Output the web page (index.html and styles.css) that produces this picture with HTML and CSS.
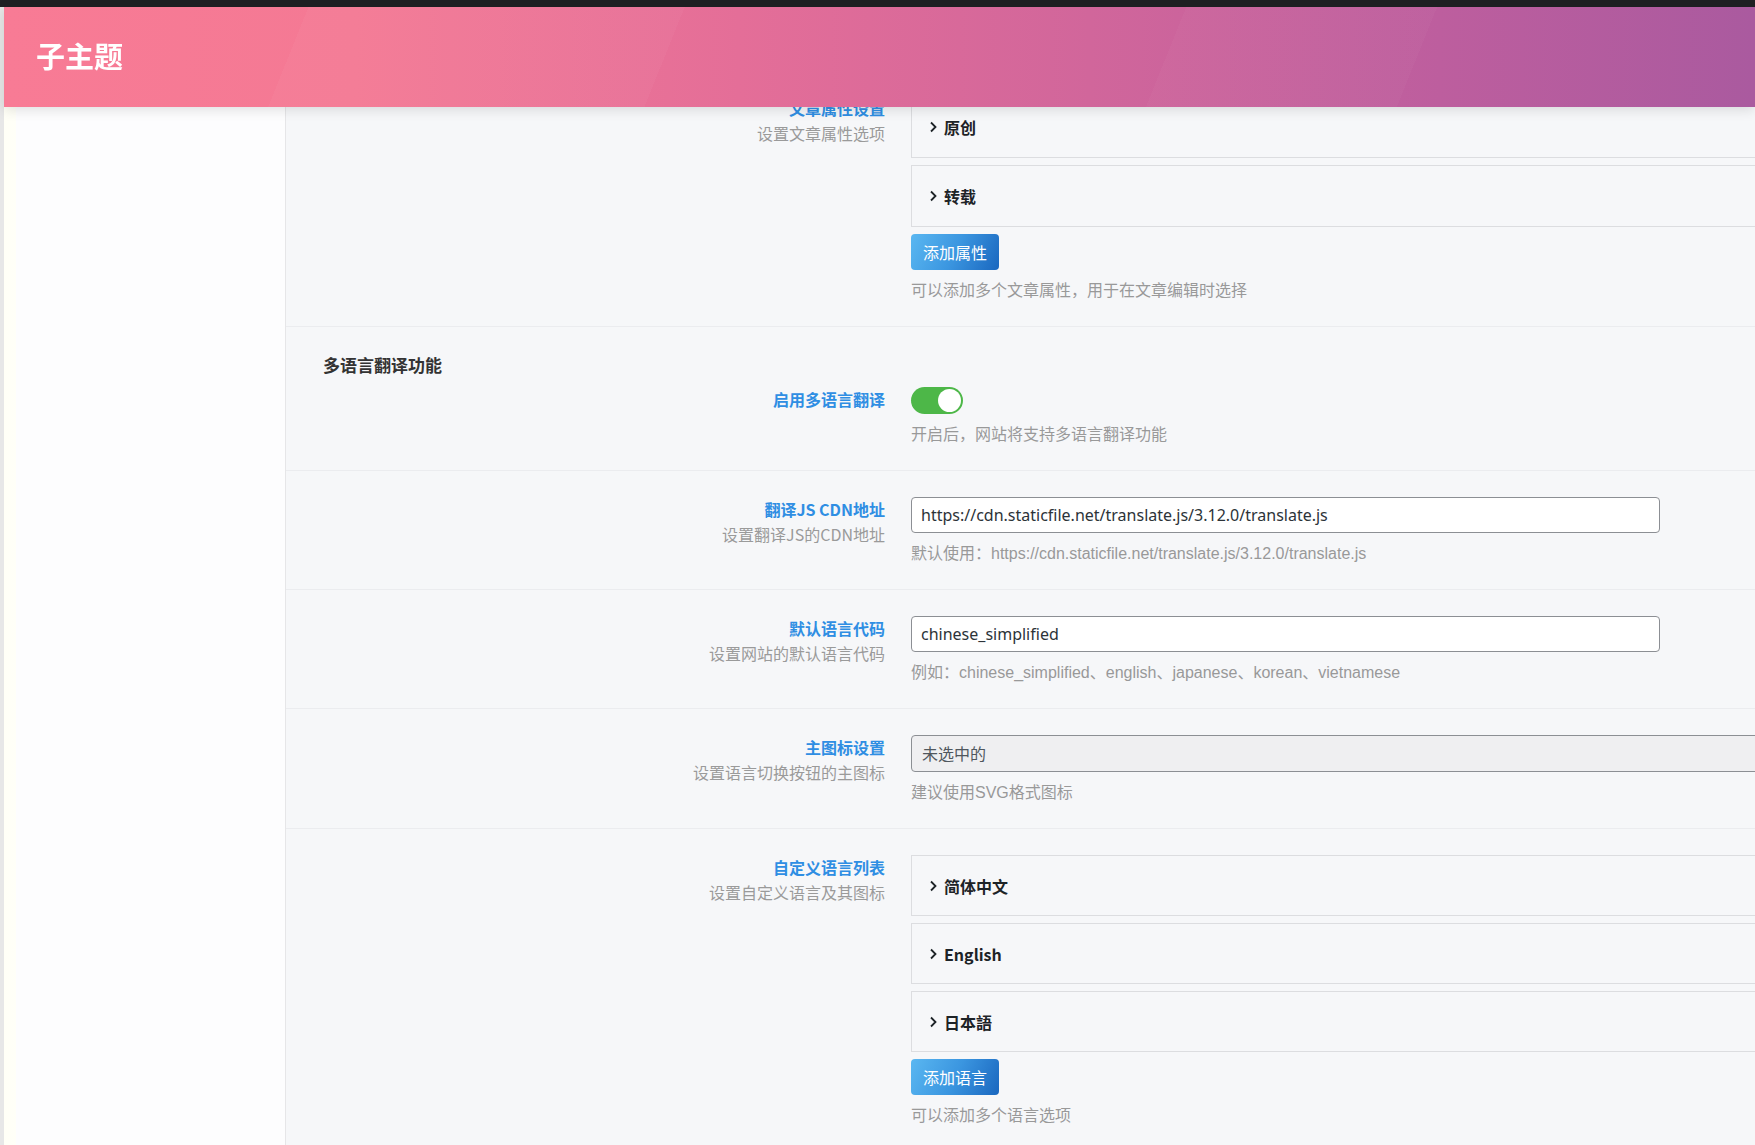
FILE: index.html
```html
<!DOCTYPE html>
<html lang="zh-CN">
  <head>
    <meta charset="UTF-8" />
    <meta name="viewport" content="width=device-width, initial-scale=1.0" />
    <title>子主题设置</title>
    <link rel="stylesheet" href="styles.css">
  </head>
  <body>
    <div class="topbar"></div>
    <header class="page-header">
      <h1>子主题</h1>
    </header>
    <div class="layout">
      <aside class="sidebar"></aside>
      <main class="options">
        <div class="opt-row">
          <div class="opt-label">
            <div class="opt-title">文章属性设置</div>
            <div class="opt-desc">设置文章属性选项</div>
          </div>
          <div class="opt-field">
            <div class="group-item">
              <svg class="chev" width="8" height="12" viewBox="0 0 8 12"><path d="M2 1.5l4.5 4.5-4.5 4.5" /></svg>
              <span>原创</span>
            </div>
            <div class="group-item">
              <svg class="chev" width="8" height="12" viewBox="0 0 8 12"><path d="M2 1.5l4.5 4.5-4.5 4.5" /></svg>
              <span>转载</span>
            </div>
            <button class="btn-add">添加属性</button>
            <p class="opt-help">可以添加多个文章属性，用于在文章编辑时选择</p>
          </div>
        </div>

        <div class="opt-section">
          <h3>多语言翻译功能</h3>
          <div class="opt-row">
            <div class="opt-label">
              <div class="opt-title">启用多语言翻译</div>
            </div>
            <div class="opt-field">
              <span class="switch on"><span class="knob"></span></span>
              <p class="opt-help">开启后，网站将支持多语言翻译功能</p>
            </div>
          </div>
        </div>

        <div class="opt-row">
          <div class="opt-label">
            <div class="opt-title">翻译JS CDN地址</div>
            <div class="opt-desc">设置翻译JS的CDN地址</div>
          </div>
          <div class="opt-field">
            <input class="text-input" type="text" value="https://cdn.staticfile.net/translate.js/3.12.0/translate.js" />
            <p class="opt-help">默认使用：https://cdn.staticfile.net/translate.js/3.12.0/translate.js</p>
          </div>
        </div>

        <div class="opt-row">
          <div class="opt-label">
            <div class="opt-title">默认语言代码</div>
            <div class="opt-desc">设置网站的默认语言代码</div>
          </div>
          <div class="opt-field">
            <input class="text-input" type="text" value="chinese_simplified" />
            <p class="opt-help">例如：chinese_simplified、english、japanese、korean、vietnamese</p>
          </div>
        </div>

        <div class="opt-row">
          <div class="opt-label">
            <div class="opt-title">主图标设置</div>
            <div class="opt-desc">设置语言切换按钮的主图标</div>
          </div>
          <div class="opt-field">
            <div class="upload-box">未选中的</div>
            <p class="opt-help">建议使用SVG格式图标</p>
          </div>
        </div>

        <div class="opt-row list-row">
          <div class="opt-label">
            <div class="opt-title">自定义语言列表</div>
            <div class="opt-desc">设置自定义语言及其图标</div>
          </div>
          <div class="opt-field">
            <div class="group-item">
              <svg class="chev" width="8" height="12" viewBox="0 0 8 12"><path d="M2 1.5l4.5 4.5-4.5 4.5" /></svg>
              <span>简体中文</span>
            </div>
            <div class="group-item">
              <svg class="chev" width="8" height="12" viewBox="0 0 8 12"><path d="M2 1.5l4.5 4.5-4.5 4.5" /></svg>
              <span>English</span>
            </div>
            <div class="group-item">
              <svg class="chev" width="8" height="12" viewBox="0 0 8 12"><path d="M2 1.5l4.5 4.5-4.5 4.5" /></svg>
              <span>日本語</span>
            </div>
            <button class="btn-add">添加语言</button>
            <p class="opt-help">可以添加多个语言选项</p>
          </div>
        </div>
      </main>
    </div>
  </body>
</html>
```

FILE: styles.css
```css
body {
  margin: 0;
  overflow: hidden;
  height: 1145px;
  background-color: #f6f7f9;
  font-family: "Noto Sans CJK SC", "Noto Sans", sans-serif;
  font-size: 16px;
  color: #2c3338;
}
.topbar {
  height: 7px;
  background-color: #1f2023;
}
.page-header {
  position: fixed;
  top: 7px;
  left: 4px;
  right: 0;
  height: 100px;
  z-index: 10;
  display: flex;
  align-items: center;
  padding-left: 32px;
  background:
    linear-gradient(112deg, transparent 17%, rgba(255, 255, 255, 0.03) 17%, rgba(255, 255, 255, 0.03) 38%, transparent 38%),
    linear-gradient(112deg, transparent 66%, rgba(255, 255, 255, 0.025) 66%, rgba(255, 255, 255, 0.025) 80%, transparent 80%),
    linear-gradient(90deg, #f87b95 0%, #f47994 20%, #e46e98 42%, #d1669b 62%, #bd5e9e 82%, #aa5a9f 100%);
  box-shadow: 0 3px 12px rgba(0, 0, 0, 0.12);
}
.page-header h1 {
  margin: -4px 0 0;
  font-size: 29px;
  font-weight: 700;
  color: #fff;
}
.layout {
  display: flex;
  min-height: 1138px;
  border-left: 4px solid #e7e7e7;
}
.sidebar {
  width: 281px;
  flex-shrink: 0;
  background: linear-gradient(90deg, #fffff6 0, #fffff8 12px, #fdfdfe 12px);
  border-right: 1px solid #e6e6e8;
}
.options {
  flex: 1;
  padding-top: 63px;
}
.opt-row {
  display: grid;
  grid-template-columns: 599px 900px;
  column-gap: 26px;
  padding: 26px 0 24px;
  border-bottom: 1px solid #ebecef;
}
.opt-section {
  padding-top: 26px;
  border-bottom: 1px solid #ebecef;
}
.opt-section h3 {
  margin: 0 0 10px 37px;
  font-size: 17px;
  line-height: 24px;
  font-weight: 600;
  color: #333;
}
.opt-section .opt-row {
  padding-top: 0;
  border-bottom: none;
}
.opt-label {
  text-align: right;
}
.opt-title {
  line-height: 24px;
  font-weight: 600;
  color: #2f8ee3;
}
.opt-desc {
  line-height: 26px;
  color: #9a9a9a;
}
.opt-field {
  min-width: 0;
}
.opt-help {
  margin: 10px 0 0;
  line-height: 22px;
  font-family: "Liberation Sans", "Noto Sans CJK SC", sans-serif;
  color: #999;
}
.group-item {
  display: flex;
  align-items: center;
  gap: 7px;
  height: 60px;
  padding-left: 17px;
  margin-bottom: 7px;
  border: 1px solid #dcdde0;
  border-right: none;
  font-weight: 600;
  color: #1d2327;
}
.list-row .group-item {
  height: 59px;
}
.chev path {
  fill: none;
  stroke: #1d2327;
  stroke-width: 1.8;
}
.btn-add {
  display: block;
  height: 36px;
  padding: 0 12px;
  border: none;
  border-radius: 4px;
  background: linear-gradient(115deg, #5ab7f1 0%, #3b96e0 50%, #1a67bf 100%);
  font-family: inherit;
  font-size: 16px;
  color: #fff;
}
.text-input {
  display: block;
  box-sizing: border-box;
  width: 749px;
  height: 36px;
  padding: 0 9px;
  margin: 0;
  border: 1px solid #8c8f94;
  border-radius: 4px;
  background-color: #fff;
  font-family: "Noto Sans", "Noto Sans CJK SC", sans-serif;
  font-size: 16px;
  color: #2c3338;
}
.upload-box {
  box-sizing: border-box;
  height: 37px;
  padding-left: 10px;
  line-height: 35px;
  border: 1px solid #8c8f94;
  border-radius: 4px;
  background-color: #efeff1;
  color: #50575e;
}
.switch {
  display: block;
  position: relative;
  width: 52px;
  height: 27px;
  border-radius: 14px;
  background-color: #4db748;
}
.switch .knob {
  position: absolute;
  top: 2px;
  right: 2px;
  width: 23px;
  height: 23px;
  border-radius: 50%;
  background-color: #fff;
}
```
